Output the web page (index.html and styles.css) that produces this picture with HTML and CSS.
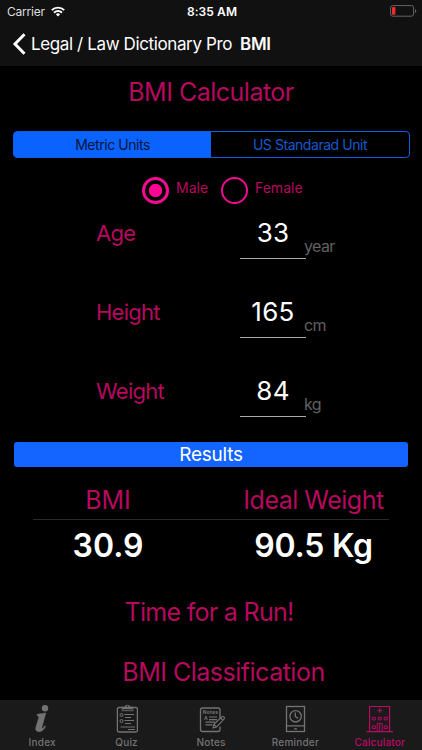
FILE: index.html
```html
<!DOCTYPE html>
<html lang="en">
<head>
<meta charset="UTF-8" />
<meta name="viewport" content="width=device-width, initial-scale=1" />
<title>BMI</title>
<link rel="stylesheet" href="styles.css">
</head>
<body>

<header class="top">
  <div class="status-bar">
    <div class="carrier">
      <span>Carrier</span>
      <svg width="14" height="11" viewBox="0 0 14 11" fill="none" stroke="#fff" stroke-width="1.9">
        <path d="M.8 4.2a8.8 8.8 0 0 1 12.4 0" />
        <path d="M3 6.7a5.7 5.7 0 0 1 8 0" />
        <path d="M7 10.5 4.9 8.4a3 3 0 0 1 4.2 0z" fill="#fff" stroke="none" />
      </svg>
    </div>
    <span class="time">8:35 AM</span>
    <svg class="battery" width="27" height="12" viewBox="0 0 27 12">
      <rect x=".6" y=".6" width="23" height="10.6" rx="2.2" fill="none" stroke="#666" />
      <rect x="2" y="2" width="3.4" height="7.8" rx=".8" fill="#ee2a2e" />
      <path d="M25 4v4a2.2 2.2 0 0 0 0-4z" fill="#666" />
    </svg>
  </div>
  <nav class="nav-bar">
    <svg width="14" height="22" viewBox="0 0 14 22" fill="none" stroke="#fff" stroke-width="3">
      <path d="M12.5 1.2 3 11l9.5 9.8" />
    </svg>
    <span class="back">Legal / Law Dictionary Pro</span>
    <span class="page-name">BMI</span>
  </nav>
</header>

<main>
  <h1>BMI Calculator</h1>

  <div class="segment">
    <button class="seg active">Metric Units</button>
    <button class="seg">US Standarad Unit</button>
  </div>

  <div class="gender">
    <span class="radio checked"></span>
    <span class="gender-label male">Male</span>
    <span class="radio"></span>
    <span class="gender-label">Female</span>
  </div>

  <div class="field">
    <span class="field-label">Age</span>
    <span class="field-value">33</span>
    <span class="unit">year</span>
  </div>
  <div class="field">
    <span class="field-label">Height</span>
    <span class="field-value">165</span>
    <span class="unit">cm</span>
  </div>
  <div class="field">
    <span class="field-label">Weight</span>
    <span class="field-value">84</span>
    <span class="unit">kg</span>
  </div>

  <div class="results-bar">Results</div>

  <div class="results">
    <div class="result-head">BMI</div>
    <div class="result-head ideal">Ideal Weight</div>
    <div class="result-value">30.9</div>
    <div class="result-value ideal">90.5 Kg</div>
  </div>

  <p class="message">Time for a Run!</p>
  <h2>BMI Classification</h2>
</main>

<footer class="tab-bar">
  <a class="tab">
    <svg width="34" height="34" viewBox="0 0 34 34" fill="currentColor">
      <circle cx="20" cy="8.2" r="3.2" />
      <path d="M12.3 14.2 20.8 13l-3.9 14.2c-.3 1.2.4 1.5 1.3.5l1.5-1.8.9.6c-2.1 3.6-4 5.2-6.5 5.2-2.7 0-4-1.5-3.3-4.1l2.8-9.4c.5-1.7.3-2.3-1.5-2.4z" stroke="currentColor" stroke-width=".5" />
    </svg>
    <span>Index</span>
  </a>
  <a class="tab">
    <svg width="34" height="34" viewBox="0 0 34 34" fill="none" stroke="currentColor">
      <rect x="7.4" y="7.5" width="20" height="24.5" rx="1.5" stroke-width="1.3" />
      <path d="M12 9.2V6.8h3c.2-2.7 4.8-2.7 5 0h3v2.4z" fill="currentColor" stroke="none" />
      <circle cx="17.5" cy="6.3" r=".8" fill="#1a1a1a" stroke="none" />
      <path d="M12 9.2v1.5h11V9.2" stroke-width=".8" />
      <circle cx="11.5" cy="15" r="1.5" />
      <circle cx="11.5" cy="21" r="1.5" />
      <path d="M14.5 14.5H24M15 17.5h6M14.5 20.5H24M15 23.5h6M10.5 27H25M18 29.5h7" stroke-width="1.2" />
    </svg>
    <span>Quiz</span>
  </a>
  <a class="tab">
    <svg width="34" height="34" viewBox="0 0 34 34" fill="none" stroke="currentColor">
      <path d="M26 18.5V10a2 2 0 0 0-2-2H8.5a2 2 0 0 0-2 2v19.5a2 2 0 0 0 2 2H24a2 2 0 0 0 2-2V26.5" stroke-width="1.3" />
      <text x="8.7" y="14.3" class="icon-text">Notes</text>
      <text x="10" y="20.3" class="icon-text">A</text>
      <path d="M15 17h8M15 19.6h8M11.5 22.2h9.5M11.5 24.8h7" stroke-width="1.2" />
      <path d="M19 28l.8-3.7 8.1-7.5c1.4-1 3.3.8 2.3 2.2l-7.7 7.9zM20 24.3l2.5 2.5M26.6 18l2.4 2.5" stroke-width="1.1" fill="#1a1a1a" />
    </svg>
    <span>Notes</span>
  </a>
  <a class="tab">
    <svg width="34" height="34" viewBox="0 0 34 34" fill="none" stroke="currentColor" stroke-width="1.3">
      <rect x="8.5" y="6.5" width="18" height="25" />
      <path d="M8.5 25.8h18M16 28.8h3" />
      <circle cx="17.6" cy="16.3" r="5.7" />
      <path d="M17.3 12.6v3.9l2.8 1.9" />
    </svg>
    <span>Reminder</span>
  </a>
  <a class="tab selected">
    <svg width="34" height="34" viewBox="0 0 34 34" fill="none" stroke="currentColor" stroke-width="1.2">
      <path d="M6.6 31.5v-25h20v25M3.5 31.7h26.5" />
      <path d="M16.7 8.3v4.4M14.5 10.5h4.4" />
      <path d="M9.3 17.3h3v2.6h-3zM15.2 17.3h3v2.6h-3zM21.2 17.3h3v2.6h-3zM9.3 25.9h3v2.6h-3zM21.2 25.9h3v2.6h-3z" stroke-width="1" />
      <path d="M14.2 31.5v-8.2h5v8.2M16.7 23.5v8" stroke-width="1" />
    </svg>
    <span>Calculator</span>
  </a>
</footer>

</body>
</html>
```
FILE: styles.css
```css
* {
  box-sizing: border-box;
}
body {
  margin: 0;
  height: 750px;
  overflow: hidden;
  display: flex;
  flex-direction: column;
  background: #000;
  color: #fff;
  font-family: Inter, "Liberation Sans", sans-serif;
}
.top {
  flex: none;
  height: 66px;
  background: #111;
}
.status-bar {
  height: 22px;
  padding: 0 5px 0 7px;
  display: grid;
  grid-template-columns: 1fr auto 1fr;
  align-items: center;
  font-size: 12px;
}
.carrier {
  display: flex;
  align-items: center;
  gap: 6px;
  color: #ddd;
  letter-spacing: -0.2px;
}
.time {
  font-weight: 600;
  letter-spacing: 0.1px;
}
.battery {
  justify-self: end;
}
.nav-bar {
  height: 43px;
  padding-left: 12px;
  display: flex;
  align-items: center;
  font-size: 17px;
  white-space: nowrap;
}
.back {
  margin-left: 5px;
  letter-spacing: -0.38px;
}
.page-name {
  margin-left: 8px;
  font-weight: 600;
  letter-spacing: -0.3px;
}
main {
  flex: 1;
  min-height: 0;
  color: #b7095e;
}
h1, h2, .message {
  margin: 0;
  font-size: 25px;
  font-weight: 400;
  letter-spacing: -0.5px;
  text-align: center;
}
h1 {
  height: 65px;
  line-height: 53px;
}
.segment {
  display: flex;
  height: 27px;
  margin: 0 12px 0 13px;
  border: 1px solid #0b5ee0;
  border-radius: 4px;
}
.seg {
  flex: 1;
  padding: 0;
  border: 0;
  background: none;
  color: #1459cf;
  font: 14px Inter, "Liberation Sans", sans-serif;
  letter-spacing: -0.45px;
}
.seg.active {
  flex: 0 0 197px;
  background: #0a63ff;
  color: #071437;
  border-radius: 2px 0 0 2px;
}
.gender {
  display: flex;
  height: 36px;
  margin-top: 19px;
  padding-left: 142px;
  font-size: 14px;
  line-height: 22px;
}
.radio {
  width: 27px;
  height: 27px;
  border: 2px solid #f40b91;
  border-radius: 50%;
}
.radio.checked {
  border-width: 3px;
  background: radial-gradient(circle, #ff0594 6.3px, transparent 7px);
}
.gender-label {
  margin-left: 7px;
}
.male {
  width: 45px;
}
.field {
  display: grid;
  grid-template-columns: 144px 66px 60px;
  height: 79px;
  padding-left: 96px;
}
.field-label {
  font-size: 22px;
  line-height: 41px;
  letter-spacing: -0.75px;
}
.field-value {
  height: 46px;
  border-bottom: 1px solid #aaa;
  color: #fff;
  font-size: 26px;
  line-height: 40px;
  letter-spacing: 0.3px;
  text-align: center;
}
.unit {
  margin-left: -2px;
  color: #616161;
  font-size: 16px;
  line-height: 66px;
  letter-spacing: -0.6px;
}
.results-bar {
  height: 25px;
  margin: -8px 14px 0;
  border-radius: 3px;
  background: #1465ff;
  color: #fff;
  font-size: 19px;
  line-height: 25px;
  letter-spacing: -0.25px;
  text-align: center;
}
.results {
  display: grid;
  grid-template-columns: 150px 206px;
  margin: 14px 33px 0;
  text-align: center;
}
.result-head {
  height: 39px;
  border-bottom: 1px solid #292929;
  font-size: 25px;
  line-height: 38px;
}
.result-value {
  height: 52px;
  color: #fff;
  font-size: 32px;
  font-weight: 600;
  line-height: 52px;
}
.ideal {
  padding-left: 55px;
  white-space: nowrap;
  letter-spacing: -0.5px;
}
.result-value.ideal {
  letter-spacing: -0.2px;
}
.message {
  height: 60px;
  margin-top: 10px;
  padding-right: 4px;
  line-height: 60px;
  letter-spacing: -0.7px;
}
h2 {
  height: 58px;
  padding-left: 25px;
  line-height: 60px;
}
.tab-bar {
  flex: none;
  height: 50px;
  display: grid;
  grid-template-columns: repeat(5, 1fr);
  background: #1a1a1a;
}
.tab {
  display: flex;
  flex-direction: column;
  align-items: center;
  color: #737375;
  font-size: 10px;
  font-weight: 500;
  line-height: 17px;
  letter-spacing: 0.2px;
}
.selected {
  color: #bd0866;
}
.icon-text {
  fill: currentColor;
  stroke: none;
  font-size: 5px;
  font-weight: 700;
}
```
